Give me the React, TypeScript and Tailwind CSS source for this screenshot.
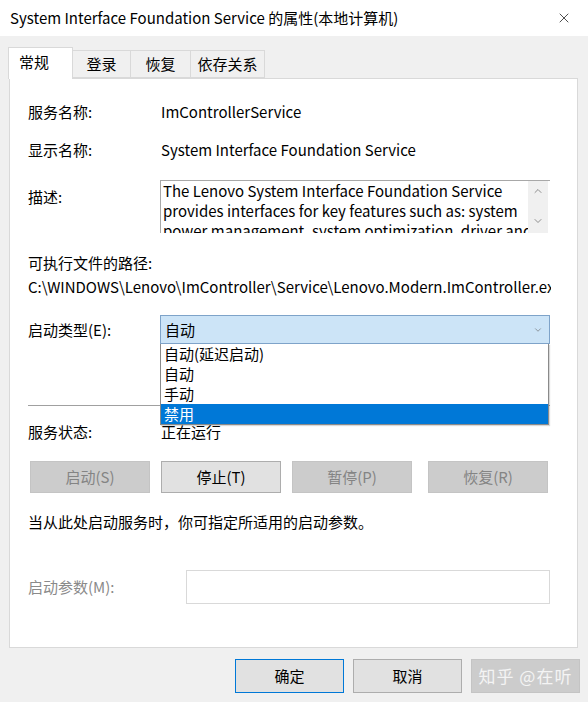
import { ChevronDown, ChevronUp, X } from "lucide-react";

const font = `font-['Noto_Sans_CJK_SC','Noto_Sans',sans-serif]`;

const descLines = [
    "The Lenovo System Interface Foundation Service",
    "provides interfaces for key features such as: system",
    "power management, system optimization, driver and",
];

const startOptions = ["自动(延迟启动)", "自动", "手动", "禁用"];

function ActionButton(props: { label: string; disabled?: boolean }) {
    return (
        <div
            className={`w-[120px] h-[32px] flex items-center justify-center border ${
                props.disabled
                    ? "bg-[#cccccc] border-[#c4c4c4] text-[#848484]"
                    : "bg-[#e1e1e1] border-[#adadad] text-black"
            }`}
        >
            {props.label}
        </div>
    );
}

export default function App() {
    return (
        <div className={`w-[588px] h-[702px] bg-[#f0f0f0] text-[15px] leading-[20px] text-black overflow-hidden ${font}`}>
            {/* title bar */}
            <div className="h-[36px] bg-white flex items-center justify-between pl-[10px] pr-[16px]">
                <div className="text-[15px]">System Interface Foundation Service 的属性(本地计算机)</div>
                <X size={16} strokeWidth={1.2} className="text-[#222]" />
            </div>

            {/* tabs */}
            <div className="h-[42px] pl-[8px] flex items-end">
                <div className="w-[65px] h-[32px] bg-white border border-b-0 border-[#d9d9d9] pl-[10px] pt-[4px] relative z-10 -mb-px">
                    常规
                </div>
                <div className="w-[58px] h-[28px] border border-l-0 border-[#d9d9d9] flex items-center justify-center">登录</div>
                <div className="w-[60px] h-[28px] border border-l-0 border-[#d9d9d9] flex items-center justify-center">恢复</div>
                <div className="w-[74px] h-[28px] border border-l-0 border-[#d9d9d9] flex items-center justify-center">依存关系</div>
            </div>

            {/* panel */}
            <div className="ml-[9px] w-[569px] h-[570px] bg-white border border-[#d9d9d9] pl-[18px] relative">
                <div className="flex mt-[23px]">
                    <div className="w-[133px]">服务名称:</div>
                    <div>ImControllerService</div>
                </div>
                <div className="flex mt-[18px]">
                    <div className="w-[133px]">显示名称:</div>
                    <div>System Interface Foundation Service</div>
                </div>
                <div className="flex mt-[20px]">
                    <div className="w-[132px] pt-[7px]">描述:</div>
                    <div className="w-[390px] h-[53px] border-t border-l border-[#a8a8a8] flex overflow-hidden">
                        <div className="flex-1 pl-[2px] whitespace-nowrap overflow-hidden">
                            {descLines.map((line) => (
                                <div key={line}>{line}</div>
                            ))}
                        </div>
                        <div className="w-[20px] mr-[2px] bg-[#f0f0f0] flex flex-col items-center justify-between pt-[4px] pb-[6px] text-[#6d6d6d]">
                            <ChevronUp size={12} strokeWidth={1.5} />
                            <ChevronDown size={12} strokeWidth={1.5} />
                        </div>
                    </div>
                </div>
                <div className="mt-[20px]">可执行文件的路径:</div>
                <div className="mt-[4px] whitespace-nowrap overflow-hidden w-[523px]">
                    C:\WINDOWS\Lenovo\ImController\Service\Lenovo.Modern.ImController.exe
                </div>

                <div className="flex items-center mt-[18px]">
                    <div className="w-[132px]">启动类型(E):</div>
                    <div className="relative">
                        <div className="w-[390px] h-[29px] bg-[#cce4f7] border border-[#7ea3c9] flex items-center justify-between pl-[4px] pr-[6px]">
                            <span>自动</span>
                            <ChevronDown size={10} strokeWidth={1.5} className="text-[#666]" />
                        </div>
                        <div className="absolute left-0 top-[29px] w-[389px] bg-white border border-[#8a8a8a] border-t-0 z-20 shadow-[1px_1px_1px_rgba(0,0,0,0.15)]">
                            {startOptions.map((opt, i) => (
                                <div
                                    key={opt}
                                    className={`h-[20px] pl-[3px] leading-[20px] ${
                                        i == startOptions.length - 1 ? "bg-[#0078d7] text-white" : ""
                                    }`}
                                >
                                    {opt}
                                </div>
                            ))}
                        </div>
                    </div>
                </div>

                <div className="mt-[61px] w-[522px] h-px bg-[#a0a0a0]" />

                <div className="flex mt-[16px]">
                    <div className="w-[133px]">服务状态:</div>
                    <div>正在运行</div>
                </div>

                <div className="flex gap-[11px] mt-[19px] ml-[2px]">
                    <ActionButton label="启动(S)" disabled />
                    <ActionButton label="停止(T)" />
                    <ActionButton label="暂停(P)" disabled />
                    <div className="ml-[5px]">
                        <ActionButton label="恢复(R)" disabled />
                    </div>
                </div>

                <div className="mt-[19px]">当从此处启动服务时，你可指定所适用的启动参数。</div>

                <div className="flex items-center mt-[38px]">
                    <div className="w-[158px] text-[#8a8a8a]">启动参数(M):</div>
                    <div className="w-[364px] h-[34px] border border-[#d9d9d9]" />
                </div>
            </div>

            {/* footer buttons */}
            <div className="flex mt-[11px] pl-[235px] gap-[9px]">
                <div className="w-[109px] h-[34px] bg-[#e1e1e1] border border-[#0078d7] flex items-center justify-center">确定</div>
                <div className="w-[109px] h-[34px] bg-[#e1e1e1] border border-[#adadad] flex items-center justify-center">取消</div>
                <div className="w-[109px] h-[34px] bg-[#cccccc] border border-[#c4c4c4] flex items-center justify-center text-[17px] text-[#f4f4f4] tracking-[1px]">
                    知乎 @在听
                </div>
            </div>
        </div>
    );
}
